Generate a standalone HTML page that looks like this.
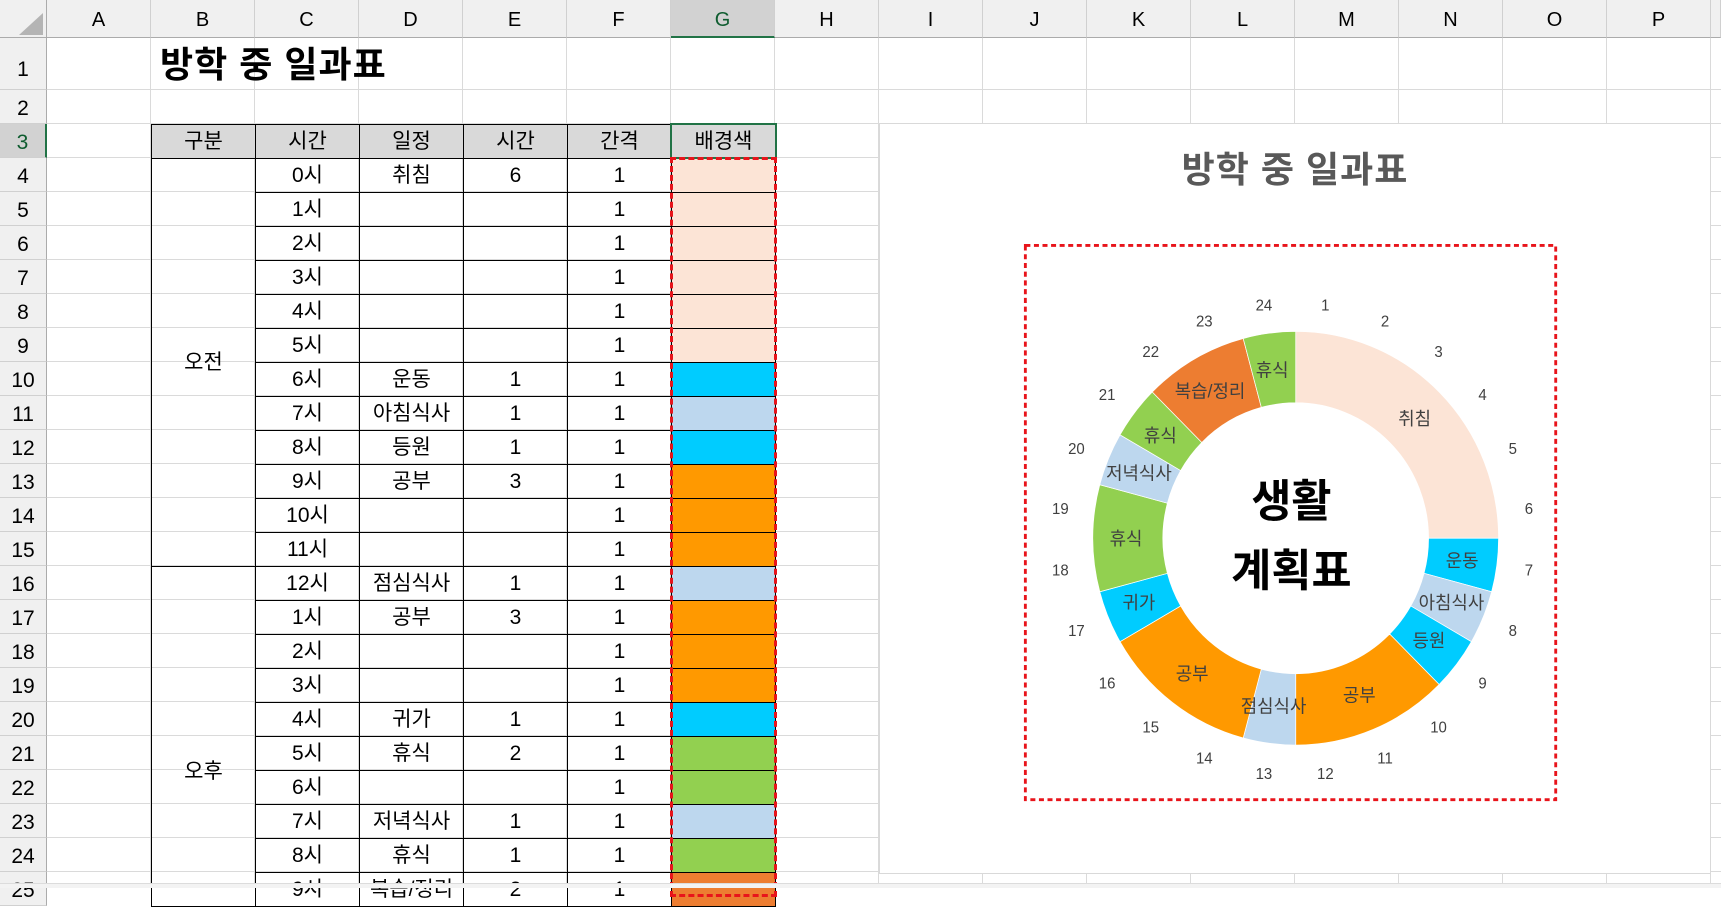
<!DOCTYPE html>
<html><head><meta charset="utf-8"><style>
*{margin:0;padding:0;box-sizing:border-box}
body{width:1721px;height:888px;overflow:hidden;background:#fff;position:relative;font-family:"Liberation Sans","Noto Sans CJK KR",sans-serif;color:#000}
.abs{position:absolute}
.gridv{left:47px;top:38px;width:1674px;height:850px;
background-image:repeating-linear-gradient(to right,transparent 0 103px,#dadada 103px 104px);}
.gridh{left:47px;top:89px;width:1674px;height:800px;
background-image:repeating-linear-gradient(to bottom,#dadada 0 1px,transparent 1px 34px);}
.colh{top:0;height:38px;background:#f0f0f0;border-bottom:1px solid #ababab;border-right:1px solid #d0d0d0;font-size:20px;line-height:40px;text-align:center;width:104px}
.rowh{left:0;width:47px;background:#f0f0f0;border-right:1px solid #ababab;border-bottom:1px solid #d0d0d0;font-size:21px;text-align:center;height:34px;line-height:38px}
table{position:absolute;left:151px;top:124px;border-collapse:collapse;table-layout:fixed;width:625px}
td{border:1px solid #000;height:34px;font-size:21px;text-align:center;padding:0;line-height:30px;white-space:nowrap;overflow:hidden}
th{border:1px solid #000;height:34px;font-size:21px;font-weight:normal;background:#d9d9d9;line-height:30px}
</style></head><body>
<div class="abs gridv"></div>
<div class="abs gridh"></div>
<div class="abs" style="left:0;top:0;width:47px;height:38px;background:#f0f0f0;border-right:1px solid #ababab;border-bottom:1px solid #ababab"></div>
<div class="abs" style="left:19px;top:13px;width:0;height:0;border-left:24px solid transparent;border-bottom:22px solid #b4b4b4"></div>
<div class="abs colh" style="left:47px">A</div><div class="abs colh" style="left:151px">B</div><div class="abs colh" style="left:255px">C</div><div class="abs colh" style="left:359px">D</div><div class="abs colh" style="left:463px">E</div><div class="abs colh" style="left:567px">F</div><div class="abs colh" style="left:671px;background:#d2d2d2;color:#0e5c2f;border-bottom:2px solid #217346">G</div><div class="abs colh" style="left:775px">H</div><div class="abs colh" style="left:879px">I</div><div class="abs colh" style="left:983px">J</div><div class="abs colh" style="left:1087px">K</div><div class="abs colh" style="left:1191px">L</div><div class="abs colh" style="left:1295px">M</div><div class="abs colh" style="left:1399px">N</div><div class="abs colh" style="left:1503px">O</div><div class="abs colh" style="left:1607px">P</div><div class="abs colh" style="left:1711px;width:10px"></div>
<div class="abs rowh" style="top:38px;height:52px;line-height:64px">1</div>
<div class="abs rowh" style="top:90px">2</div>
<div class="abs rowh" style="top:124px;background:#d2d2d2;color:#0e5c2f;border-right:2px solid #217346">3</div>
<div class="abs rowh" style="top:158px">4</div><div class="abs rowh" style="top:192px">5</div><div class="abs rowh" style="top:226px">6</div><div class="abs rowh" style="top:260px">7</div><div class="abs rowh" style="top:294px">8</div><div class="abs rowh" style="top:328px">9</div><div class="abs rowh" style="top:362px">10</div><div class="abs rowh" style="top:396px">11</div><div class="abs rowh" style="top:430px">12</div><div class="abs rowh" style="top:464px">13</div><div class="abs rowh" style="top:498px">14</div><div class="abs rowh" style="top:532px">15</div><div class="abs rowh" style="top:566px">16</div><div class="abs rowh" style="top:600px">17</div><div class="abs rowh" style="top:634px">18</div><div class="abs rowh" style="top:668px">19</div><div class="abs rowh" style="top:702px">20</div><div class="abs rowh" style="top:736px">21</div><div class="abs rowh" style="top:770px">22</div><div class="abs rowh" style="top:804px">23</div><div class="abs rowh" style="top:838px">24</div><div class="abs rowh" style="top:872px">25</div>
<div class="abs" style="left:160px;top:43px;font-size:36px;font-weight:bold;line-height:44px;letter-spacing:1px">방학 중 일과표</div>
<table>
<tr><th>구분</th><th>시간</th><th>일정</th><th>시간</th><th>간격</th><th>배경색</th></tr>
<tr><td rowspan="12">오전</td><td>0시</td><td>취침</td><td>6</td><td>1</td><td style="background:#fce4d6"></td></tr>
<tr><td>1시</td><td></td><td></td><td>1</td><td style="background:#fce4d6"></td></tr>
<tr><td>2시</td><td></td><td></td><td>1</td><td style="background:#fce4d6"></td></tr>
<tr><td>3시</td><td></td><td></td><td>1</td><td style="background:#fce4d6"></td></tr>
<tr><td>4시</td><td></td><td></td><td>1</td><td style="background:#fce4d6"></td></tr>
<tr><td>5시</td><td></td><td></td><td>1</td><td style="background:#fce4d6"></td></tr>
<tr><td>6시</td><td>운동</td><td>1</td><td>1</td><td style="background:#00ccff"></td></tr>
<tr><td>7시</td><td>아침식사</td><td>1</td><td>1</td><td style="background:#bdd7ee"></td></tr>
<tr><td>8시</td><td>등원</td><td>1</td><td>1</td><td style="background:#00ccff"></td></tr>
<tr><td>9시</td><td>공부</td><td>3</td><td>1</td><td style="background:#ff9900"></td></tr>
<tr><td>10시</td><td></td><td></td><td>1</td><td style="background:#ff9900"></td></tr>
<tr><td>11시</td><td></td><td></td><td>1</td><td style="background:#ff9900"></td></tr>
<tr><td rowspan="10" style="vertical-align:top;padding-top:190px">오후</td><td>12시</td><td>점심식사</td><td>1</td><td>1</td><td style="background:#bdd7ee"></td></tr>
<tr><td>1시</td><td>공부</td><td>3</td><td>1</td><td style="background:#ff9900"></td></tr>
<tr><td>2시</td><td></td><td></td><td>1</td><td style="background:#ff9900"></td></tr>
<tr><td>3시</td><td></td><td></td><td>1</td><td style="background:#ff9900"></td></tr>
<tr><td>4시</td><td>귀가</td><td>1</td><td>1</td><td style="background:#00ccff"></td></tr>
<tr><td>5시</td><td>휴식</td><td>2</td><td>1</td><td style="background:#92d050"></td></tr>
<tr><td>6시</td><td></td><td></td><td>1</td><td style="background:#92d050"></td></tr>
<tr><td>7시</td><td>저녁식사</td><td>1</td><td>1</td><td style="background:#bdd7ee"></td></tr>
<tr><td>8시</td><td>휴식</td><td>1</td><td>1</td><td style="background:#92d050"></td></tr>
<tr><td>9시</td><td>복습/정리</td><td>2</td><td>1</td><td style="background:#ed7d31"></td></tr>
</table>
<div class="abs" style="left:670px;top:123px;width:107px;height:36px;border:2px solid #217346"></div>
<div class="abs" style="left:670px;top:157px;width:107px;height:740px;border:3px dashed #e8141b"></div>
<div class="abs" style="left:879px;top:123px;width:832px;height:751px;border:1px solid #d9d9d9;background:#fff"></div>
<div class="abs" style="left:879px;top:146px;width:832px;text-align:center;font-size:36px;font-weight:bold;color:#595959;line-height:48px;letter-spacing:1px">방학 중 일과표</div>
<svg class="abs" style="left:1020px;top:240px" width="560" height="571" viewBox="0 0 1568 1568" preserveAspectRatio="none">
<rect x="15" y="15" width="1485" height="1522" fill="none" stroke="#e8141b" stroke-width="8" stroke-dasharray="14 10"/>
<g stroke="#fff" stroke-width="2">
<path fill="#fce4d6" d="M772 251A568 568 0 0 1 1340 819L1144 819A372 372 0 0 0 772 447Z"/>
<path fill="#00ccff" d="M1340 819A568 568 0 0 1 1320.6 966L1131.3 915.3A372 372 0 0 0 1144 819Z"/>
<path fill="#bdd7ee" d="M1320.6 966A568 568 0 0 1 1263.9 1103L1094.2 1005A372 372 0 0 0 1131.3 915.3Z"/>
<path fill="#00ccff" d="M1263.9 1103A568 568 0 0 1 1173.6 1220.6L1035 1082A372 372 0 0 0 1094.2 1005Z"/>
<path fill="#ff9900" d="M1173.6 1220.6A568 568 0 0 1 772 1387L772 1191A372 372 0 0 0 1035 1082Z"/>
<path fill="#bdd7ee" d="M772 1387A568 568 0 0 1 625 1367.6L675.7 1178.3A372 372 0 0 0 772 1191Z"/>
<path fill="#ff9900" d="M625 1367.6A568 568 0 0 1 280.1 1103L449.8 1005A372 372 0 0 0 675.7 1178.3Z"/>
<path fill="#00ccff" d="M280.1 1103A568 568 0 0 1 223.4 966L412.7 915.3A372 372 0 0 0 449.8 1005Z"/>
<path fill="#92d050" d="M223.4 966A568 568 0 0 1 223.4 672L412.7 722.7A372 372 0 0 0 412.7 915.3Z"/>
<path fill="#bdd7ee" d="M223.4 672A568 568 0 0 1 280.1 535L449.8 633A372 372 0 0 0 412.7 722.7Z"/>
<path fill="#92d050" d="M280.1 535A568 568 0 0 1 370.4 417.4L509 556A372 372 0 0 0 449.8 633Z"/>
<path fill="#ed7d31" d="M370.4 417.4A568 568 0 0 1 625 270.4L675.7 459.7A372 372 0 0 0 509 556Z"/>
<path fill="#92d050" d="M625 270.4A568 568 0 0 1 772 251L772 447A372 372 0 0 0 675.7 459.7Z"/>
</g>
<g font-size="50" fill="#404040" text-anchor="middle" font-family="Liberation Sans, Noto Sans CJK KR, sans-serif">
<text x="1105" y="508">취침</text><text x="1238" y="898">운동</text><text x="1208" y="1013">아침식사</text><text x="1145" y="1118">등원</text><text x="950" y="1268">공부</text><text x="710" y="1298">점심식사</text><text x="482" y="1208">공부</text><text x="333" y="1013">귀가</text><text x="297" y="838">휴식</text><text x="333" y="658">저녁식사</text><text x="393" y="555">휴식</text><text x="532" y="433">복습/정리</text><text x="706" y="375">휴식</text>
</g>
<g font-size="42" fill="#404040" text-anchor="middle" font-family="Liberation Sans, sans-serif">
<text x="683" y="193">24</text><text x="855" y="193">1</text><text x="1022" y="237">2</text><text x="1172" y="322">3</text><text x="1295" y="440">4</text><text x="1380" y="588">5</text><text x="1425" y="752">6</text><text x="1425" y="922">7</text><text x="1380" y="1087">8</text><text x="1295" y="1232">9</text><text x="1172" y="1353">10</text><text x="1022" y="1438">11</text><text x="855" y="1480">12</text><text x="683" y="1480">13</text><text x="516" y="1438">14</text><text x="366" y="1353">15</text><text x="244" y="1232">16</text><text x="158" y="1087">17</text><text x="113" y="922">18</text><text x="113" y="752">19</text><text x="158" y="588">20</text><text x="244" y="440">21</text><text x="366" y="322">22</text><text x="516" y="237">23</text>
</g>
<g font-size="122" font-weight="bold" fill="#000" text-anchor="middle" font-family="Liberation Sans, Noto Sans CJK KR, sans-serif">
<text x="760" y="760">생활</text><text x="760" y="950">계획표</text>
</g>
</svg>
<div class="abs" style="left:0;top:883px;width:1721px;height:5px;background:#f3f3f3;border-top:1px solid #dcdcdc;z-index:5"></div>
</body></html>
